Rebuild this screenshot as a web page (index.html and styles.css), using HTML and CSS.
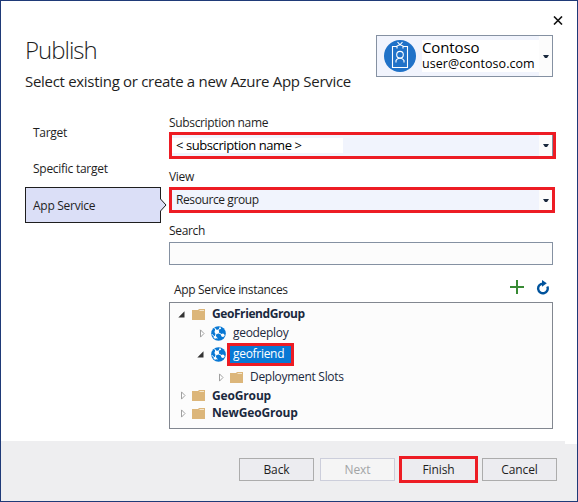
FILE: index.html
```html
<!DOCTYPE html>
<html lang="en">
<head>
<meta charset="utf-8">
<title>Publish</title>
<link rel="stylesheet" href="styles.css">
</head>
<body>
<svg class="defs" width="0" height="0" aria-hidden="true">
  <symbol id="globe" viewBox="0 0 15 15">
    <circle cx="7.5" cy="7.5" r="7.3" fill="#0878d4"/>
    <path d="M3.6 1.8L5.8 5.8L12 9.3M8.8 2.4L5.8 5.8L3.8 11.2M1 8.2Q3 11.6 6.5 12.2" fill="none" stroke="#fff" stroke-width="1"/>
    <circle cx="5.8" cy="5.8" r="2.3" fill="#fff"/>
    <circle cx="11.8" cy="9.3" r="1.7" fill="#fff"/><circle cx="4.2" cy="11.3" r="1.4" fill="#fff"/><circle cx="9" cy="2.3" r="1" fill="#fff"/>
  </symbol>
  <symbol id="folder" viewBox="0 0 13 11">
    <path d="M0 1H6L7 0H13V11H0Z" fill="#dcb67a"/><path d="M7.5 1.5H12" stroke="#f4e5ca"/>
  </symbol>
  <symbol id="open" viewBox="0 0 7 7"><path d="M6.5 .3V6.5H.3Z" fill="#333"/></symbol>
  <symbol id="closed" viewBox="0 0 7 9"><path d="M1.5 .9L5 4.5L1.5 8.1Z" fill="#fff" stroke="#a0a0a0"/></symbol>
  <symbol id="caret" viewBox="0 0 6 3"><path d="M0 0H6L4 3H2Z" fill="#1b293e"/></symbol>
</svg>
<div class="window">
  <header class="header">
    <div class="heading">
      <h1 class="title">Publish</h1>
      <p class="subtitle">Select existing or create a new Azure App Service</p>
    </div>
    <div class="corner">
      <svg class="close" width="10" height="9" viewBox="0 0 10 9"><path d="M1 .5L9 8.5M9 .5L1 8.5" stroke="#111" stroke-width="1.6"/></svg>
      <div class="account">
        <svg class="avatar" width="32" height="32" viewBox="0 0 32 32">
          <circle cx="16" cy="16" r="16" fill="#2072c8"/>
          <g fill="none" stroke="#fff" stroke-width="1.1"><path d="M13 6.5H8.5V27.5H23.5V6.5H19M13.5 2L16 4.8L18.5 2M13 8.5V6L16 4.5L19 6V8.5"/><circle cx="16" cy="14.7" r="3.3"/><path d="M12 22.5V20.5Q13 18.2 16 18.2T20 20.5V22.5"/></g>
        </svg>
        <div class="identity"><div class="org">Contoso</div><div class="mail">user@contoso.com</div></div>
        <div class="drop"><svg width="6" height="3"><use href="#caret"/></svg></div>
      </div>
    </div>
  </header>
  <div class="body">
    <nav class="steps">
      <div class="step target">Target</div>
      <div class="step specific">Specific target</div>
      <div class="step active"><span>App Service</span><svg class="pointer" width="7" height="14" viewBox="0 0 7 14"><path d="M0 1H1L6 7L1 13H0Z" fill="#dbdff7"/><path d="M.5 0V1L6 7L.5 13V14" fill="none" stroke="#1e1e1e"/></svg></div>
    </nav>
    <main class="form">
      <div class="label l-sub">Subscription name</div>
      <div class="select subscription"><div class="value"><span>&lt; subscription name &gt;</span></div><i class="mask"></i><div class="drop"><svg width="6" height="3"><use href="#caret"/></svg></div></div>
      <div class="label l-view">View</div>
      <div class="select view"><div class="value"><span>Resource group</span></div><div class="drop"><svg width="6" height="3"><use href="#caret"/></svg></div></div>
      <div class="label l-search">Search</div>
      <div class="search"></div>
      <div class="toolbar"><span class="instances">App Service instances</span>
        <svg class="add" width="14" height="14"><path d="M7 0V14M0 7H14" stroke="#388a34" stroke-width="2"/></svg>
        <svg class="refresh" width="14" height="15" viewBox="0 0 14 15"><path d="M7 3.7A4.8 4.8 0 1 0 11.3 6.5" fill="none" stroke="#00539c" stroke-width="2.4"/><path d="M6 0L10.8 3.3L6 6.8Z" fill="#00539c"/></svg>
      </div>
      <div class="tree">
        <div class="row r1"><svg class="tri" width="7" height="7"><use href="#open"/></svg><svg class="folder" width="13" height="11"><use href="#folder"/></svg><b class="t1">GeoFriendGroup</b></div>
        <div class="row r2"><svg class="tri" width="7" height="9"><use href="#closed"/></svg><svg class="globe" width="15" height="15"><use href="#globe"/></svg><span class="t2">geodeploy</span></div>
        <div class="row r3"><svg class="tri" width="7" height="7"><use href="#open"/></svg><svg class="globe" width="15" height="15"><use href="#globe"/></svg><span class="selected">geofriend</span></div>
        <div class="row r4"><svg class="tri" width="7" height="9"><use href="#closed"/></svg><svg class="folder" width="13" height="11"><use href="#folder"/></svg><span class="t4">Deployment Slots</span></div>
        <div class="row r5"><svg class="tri" width="7" height="9"><use href="#closed"/></svg><svg class="folder" width="13" height="11"><use href="#folder"/></svg><b class="t5">GeoGroup</b></div>
        <div class="row r6"><svg class="tri" width="7" height="9"><use href="#closed"/></svg><svg class="folder" width="13" height="11"><use href="#folder"/></svg><b class="t6">NewGeoGroup</b></div>
      </div>
    </main>
  </div>
  <footer class="footer">
    <button class="btn">Back</button><button class="btn disabled">Next</button><button class="btn finish">Finish</button><button class="btn cancel">Cancel</button>
  </footer>
</div>
</body>
</html>
```

FILE: styles.css
```css
* { box-sizing: border-box; }
body { margin: 0; font: 12px/18px "Open Sans", "Noto Sans", sans-serif; color: #1e1e1e; }
svg { display: block; flex: none; }
.defs { position: absolute; }
.window { width: 578px; height: 502px; border: 1px solid #1f3a78; background: #fff; display: flex; flex-direction: column; }
.header { height: 114px; display: flex; justify-content: space-between; padding-left: 24px; flex: none; }
.title { margin: 32px 0 0; font-size: 24px; line-height: 34px; font-weight: 300; letter-spacing: -1px; white-space: nowrap; }
.subtitle { margin: 3px 0 0; font-size: 15px; line-height: 22px; letter-spacing: -.3px; white-space: nowrap; }
.corner { width: 177px; margin-right: 24px; display: flex; flex-direction: column; }
.close { margin: 15px -10px 10px auto; }
.account { height: 42px; border: 1px solid #8591a2; background: #f1f4fd; display: flex; align-items: center; padding-left: 7px; }
.identity { margin-left: 6px; width: 118px; color: #000; white-space: nowrap; background: #fff; height: 32px; }
.org { font-size: 15px; line-height: 15px; letter-spacing: -.1px; height: 16px; }
.mail { font-size: 12.5px; line-height: 16px; letter-spacing: .05px; }
.drop { width: 13px; height: 100%; background: #fcfcfc; display: flex; align-items: center; justify-content: center; margin-left: auto; flex: none; }
.body { height: 325px; display: flex; flex: none; }
.steps { width: 136px; margin-left: 24px; flex: none; letter-spacing: -.27px; }
.step { height: 36px; line-height: 36px; padding-left: 8px; white-space: nowrap; }
.active { border: 1px solid #1e1e1e; background: #dbdff7; line-height: 35px; padding-left: 7px; position: relative; }
.pointer { position: absolute; left: 134px; top: 10px; }
.form { margin-left: 8px; width: 387px; letter-spacing: -.34px; }
.label { height: 18px; line-height: 18px; margin-top: 10px; white-space: nowrap; }
.l-sub { margin-top: -1px; }
.select { border: 3px solid #ed1c24; background: #f1f4fd; display: flex; align-items: center; white-space: nowrap; }
.value { padding-left: 4px; }
.subscription { height: 27px; width: 387px; }
.subscription .value { color: #000; background: #fff; height: 15px; line-height: 15px; width: 135px; font-size: 13px; letter-spacing: -.42px; }
.mask { width: 36px; height: 15px; background: #fff; }
.subscription .drop { width: 14px; border-right: 1px solid #8591a2; }
.view { height: 26px; width: 386px; margin-top: 1px; letter-spacing: -.4px; }
.l-view { margin-top: 9px; }
.l-search { margin-top: 9px; }
.search { height: 23px; width: 384px; margin-top: 2px; border: 1px solid #8591a2; background: #fcfcfc; }
.toolbar { height: 37px; width: 384px; display: flex; align-items: center; padding: 12px 3px 0 5px; white-space: nowrap; }
.toolbar .refresh { margin-left: 12px; margin-top: -5px; }
.toolbar .add { margin-left: auto; margin-top: -6px; }
.tree { width: 384px; height: 127px; border: 1px solid #828790; background: #fcfcfc; padding-top: 2px; color: #1b293e; letter-spacing: -.3px; }
.row { height: 18px; display: flex; align-items: center; white-space: nowrap; }
.row .folder { margin-left: 7px; margin-right: 7px; }
.row .globe { margin-left: 5px; margin-right: 7px; }
.r1 { padding-left: 8px; }
.r1 b { letter-spacing: -.42px; }
.r2 { padding-left: 29px; height: 20px; }
.r3 { padding-left: 27px; height: 23px; }
.row.r3 .globe { margin-left: 7px; margin-right: 1px; }
.r4 { padding-left: 48px; height: 20px; margin-top: 1px; }
.row.r4 .folder { margin-left: 5px; }
.r5, .r6 { padding-left: 10px; letter-spacing: -.15px; }
.r5 { height: 17px; }
.row.r5 .folder, .row.r6 .folder { margin-left: 5px; }
.selected { height: 23px; width: 67px; border: 3px solid #ed1c24; background: #0878d4; color: #fff; line-height: 16px; padding-left: 3px; }
.footer { flex: 1; background: linear-gradient(#fff, #fff) right top / 12px 3px no-repeat #eeeef0; margin-top: 1px; display: flex; padding: 17px 0 0 238px; }
.btn { width: 75px; height: 23px; border: 1px solid #acacac; background: #ececf0; color: #1e1e1e; font: inherit; line-height: 18px; padding: 0; flex: none; letter-spacing: -.1px; }
.disabled { margin-left: 6px; border-color: #cccedb; background: #f5f5f5; color: #a2a4a5; }
.finish { margin: -2px 0 0 4px; height: 27px; width: 79px; border: 3px solid #ed1c24; }
.cancel { margin-left: 4px; }
```
